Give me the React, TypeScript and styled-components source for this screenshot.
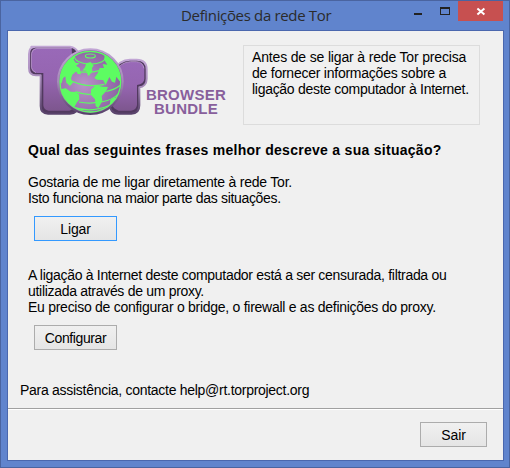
import React from "react";
import styled, { createGlobalStyle } from "styled-components";

const GlobalStyle = createGlobalStyle`
  * { box-sizing: border-box; }
  body { margin: 0; }
`;

const Window = styled.div`
  width: 510px;
  height: 468px;
  padding: 0 5px 6px 6px;
  display: flex;
  flex-direction: column;
  background: #6084cd;
  border: 1px solid #4a64a0;
  font: 14px/16px "Liberation Sans", Arial, sans-serif;
  color: #000;
`;

const TitleBar = styled.header`
  flex: 0 0 29px;
  display: grid;
  grid-template-columns: 101px 1fr auto;
  padding-right: 1px;
`;

const Title = styled.h1`
  grid-column: 2;
  margin: 0;
  padding-left: 73px;
  font: 400 15px/29px "Open Sans", sans-serif;
  letter-spacing: -0.34px;
  color: #2b2b2b;
  white-space: nowrap;
`;

const Controls = styled.div`
  display: flex;
`;

const Control = styled.button<{ $width: number; $close?: boolean }>`
  width: ${(p) => p.$width}px;
  height: 20px;
  padding: 0;
  border: 0;
  display: block;
  background: ${(p) => (p.$close ? "#c75050" : "transparent")};
  svg { display: block; }
`;

const Client = styled.main`
  flex: 1;
  display: flex;
  flex-direction: column;
  background: #f0f0f0;
  border: 1px solid #4a67ae;
`;

const Head = styled.div`
  display: flex;
  padding: 13px 23px 0 20px;
  height: 94px;
`;

const Brand = styled.div`
  width: 215px;
  display: flex;
  align-items: flex-start;
`;

const Mark = styled.svg`
  flex: none;
  display: block;
`;

const Wordmark = styled.div`
  display: flex;
  flex-direction: column;
  align-items: center;
  width: 82px;
  margin: 44px 0 0 -7px;
  flex: none;
  font-weight: 700;
  font-size: 15px;
  line-height: 14px;
  letter-spacing: 0.25px;
  color: #885f9c;
`;

const Info = styled.div`
  width: 237px;
  height: 80px;
  margin-top: 1px;
  padding: 3px 0 0 8px;
  border: 1px solid #dcdcdc;
`;

const Line = styled.div<{ $spacing: number }>`
  width: max-content;
  white-space: pre;
  letter-spacing: ${(p) => p.$spacing}px;
`;

const Question = styled.h2`
  margin: 17px 0 0 20px;
  font-size: 14px;
  line-height: 16px;
  white-space: nowrap;
  letter-spacing: 0.28px;
`;

const Option = styled.section<{ $top: number }>`
  margin: ${(p) => p.$top}px 0 0 20px;
`;

const Button = styled.button<{ $width?: number; $primary?: boolean }>`
  display: block;
  width: ${(p) => p.$width ?? 83}px;
  height: 25px;
  padding: 0;
  border: 1px solid ${(p) => (p.$primary ? "#3399ff" : "#acacac")};
  background: linear-gradient(#f0f0f0, #e5e5e5);
  font: inherit;
  letter-spacing: ${(p) => (p.$primary || p.$width ? -0.15 : -0.4)}px;
  color: #000;
`;

const OptionAction = styled.div`
  margin: 10px 0 0 6px;
`;

const Help = styled.div`
  margin: 32px 0 0 12px;
`;

const Footer = styled.footer`
  margin-top: auto;
  height: 52px;
  border-top: 1px solid #a0a0a0;
  box-shadow: inset 0 1px 0 #fff;
  display: flex;
  justify-content: flex-end;
  padding: 13px 16px 0 0;
`;

function TorMark() {
  const letterT = "M34 26H150C176 28 184 60 176 84V200C176 217 166 227 150 227H84C68 227 62 218 62 204V112H48C32 112 27 102 27 90V48C27 33 32 26 46 26Z";
  const letterR = "M280 100C292 76 308 65 330 65H350C371 65 380 77 380 94V122C380 138 370 147 358 148V202C358 219 350 227 334 227H296C278 227 268 214 268 196V112Z";
  return (
    <Mark width="124" height="72" viewBox="24 18 372 216" aria-label="Tor">
      <defs>
        <linearGradient id="face" x1="0" y1="0" x2="0" y2="1">
          <stop offset="0" stopColor="#9969b8" />
          <stop offset=".5" stopColor="#9565b0" />
          <stop offset="1" stopColor="#7d568e" />
        </linearGradient>
        <linearGradient id="rim" x1="0" y1="0" x2="0" y2="1">
          <stop offset="0" stopColor="#c1a5d4" />
          <stop offset=".5" stopColor="#a68ab9" />
          <stop offset="1" stopColor="#58416a" />
        </linearGradient>
        <radialGradient id="sea" cx=".4" cy=".55" r=".6">
          <stop offset="0" stopColor="#b991c8" />
          <stop offset="1" stopColor="#8960a0" />
        </radialGradient>
        <clipPath id="disc"><circle cx="104" cy="113" r="91" /></clipPath>
      </defs>
      <g stroke="url(#rim)" strokeWidth="6" strokeLinejoin="round" fill="#51395f">
        <path d={letterT} /><path d={letterR} />
      </g>
      <g fill="url(#face)">
        <path d="M50 31H155L164 208Q160 216 148 218H86Q71 216 70 202V105H51Q36 102 34 88V47Q36 33 50 31Z" />
        <path d="M285 105Q299 74 331 71H350Q370 73 373 92V122Q372 138 351 141V201Q349 216 333 218H296Q280 213 275 198Z" />
      </g>
      <path d="M48 104Q35 99 34 88V47Q36 33 50 31H155M286 102Q300 73 331 71H350Q368 72 372 91" fill="none" stroke="#caaedb" strokeWidth="2" />
      <g transform="translate(107 18)">
        <circle cx="104" cy="113" r="97" fill="url(#sea)" stroke="url(#rim)" strokeWidth="6" />
        <g clipPath="url(#disc)" fill="none" stroke="#5dfc62" strokeWidth="3.5">
          <ellipse cx="104" cy="36" rx="15" ry="6" />
          <path d="M57 34C50 68 158 70 149 34M60 34C72 18 136 18 148 34" />
          <path d="M62 82Q104 88 130 80M46 110Q90 132 146 121M60 143Q90 154 110 150M70 174Q100 180 122 175M136 174Q172 168 187 150M152 142Q176 138 194 124M48 188Q104 209 162 184" />
        </g>
        <g clipPath="url(#disc)" fill="#5dfc62">
          <path d="M72 24L58 34L54 47L60 56L72 58L61 65L72 72L76 91L66 90L62 82L50 92L46 104L52 116L43 126L32 116L29 97L22 103L18 118L8 118V70L38 28Z" />
          <path d="M92 58L105 54L114 65L109 72L110 83L98 97L91 80L80 80L88 70Z" />
          <path d="M147 30L166 44L190 72L200 108L192 112L182 98L178 116L169 113L161 99L150 123L142 108L124 107L116 102L126 88L132 72L145 72L141 60L155 62L146 48Z" />
          <path d="M10 136L30 133L45 143L61 144L70 151L71 166L63 176L56 190L40 183L22 166Z" />
          <path d="M106 137L120 124L140 128L157 129L151 142L138 156L140 171L128 192L120 187L118 166L106 153Z" />
          <path d="M164 168L178 160L178 177L162 186Z" />
        </g>
        <circle cx="104" cy="113" r="91" fill="none" stroke="#5dfc62" strokeWidth="4" />
      </g>
    </Mark>
  );
}

export default function App() {
  return (
    <>
      <GlobalStyle />
      <Window>
        <TitleBar>
          <Title>Definições da rede Tor</Title>
          <Controls>
            <Control $width={27} aria-label="Minimizar">
              <svg width="27" height="20"><path d="M8 12h8v2H8z" fill="#222" /></svg>
            </Control>
            <Control $width={25} aria-label="Maximizar">
              <svg width="25" height="20" shapeRendering="crispEdges">
                <path d="M7 6h10v8H7zM8 8v5h8V8z" fill="#222" fillRule="evenodd" />
              </svg>
            </Control>
            <Control $width={45} $close aria-label="Fechar">
              <svg width="45" height="20"><path d="M19.4 7.4l7 6M26.4 7.4l-7 6" stroke="#fff" strokeWidth="2" /></svg>
            </Control>
          </Controls>
        </TitleBar>
        <Client>
          <Head>
            <Brand>
              <TorMark />
              <Wordmark><span>BROWSER</span><span>BUNDLE</span></Wordmark>
            </Brand>
            <Info>
              <Line $spacing={-0.16}>Antes de se ligar à rede Tor precisa</Line>
              <Line $spacing={-0.24}>de fornecer informações sobre a</Line>
              <Line $spacing={-0.29}>ligação deste computador à Internet.</Line>
            </Info>
          </Head>
          <Question>Qual das seguintes frases melhor descreve a sua situação?</Question>
          <Option $top={16}>
            <Line $spacing={-0.22}>Gostaria de me ligar diretamente à rede Tor.</Line>
            <Line $spacing={-0.33}>Isto funciona na maior parte das situações.</Line>
            <OptionAction><Button $primary>Ligar</Button></OptionAction>
          </Option>
          <Option $top={26}>
            <Line $spacing={-0.3}>A ligação à Internet deste computador está a ser censurada, filtrada ou</Line>
            <Line $spacing={-0.3}>utilizada através de um proxy.</Line>
            <Line $spacing={-0.27}>Eu preciso de configurar o bridge, o firewall e as definições do proxy.</Line>
            <OptionAction><Button>Configurar</Button></OptionAction>
          </Option>
          <Help><Line $spacing={-0.28}>Para assistência, contacte help@rt.torproject.org</Line></Help>
          <Footer><Button $width={67}>Sair</Button></Footer>
        </Client>
      </Window>
    </>
  );
}
